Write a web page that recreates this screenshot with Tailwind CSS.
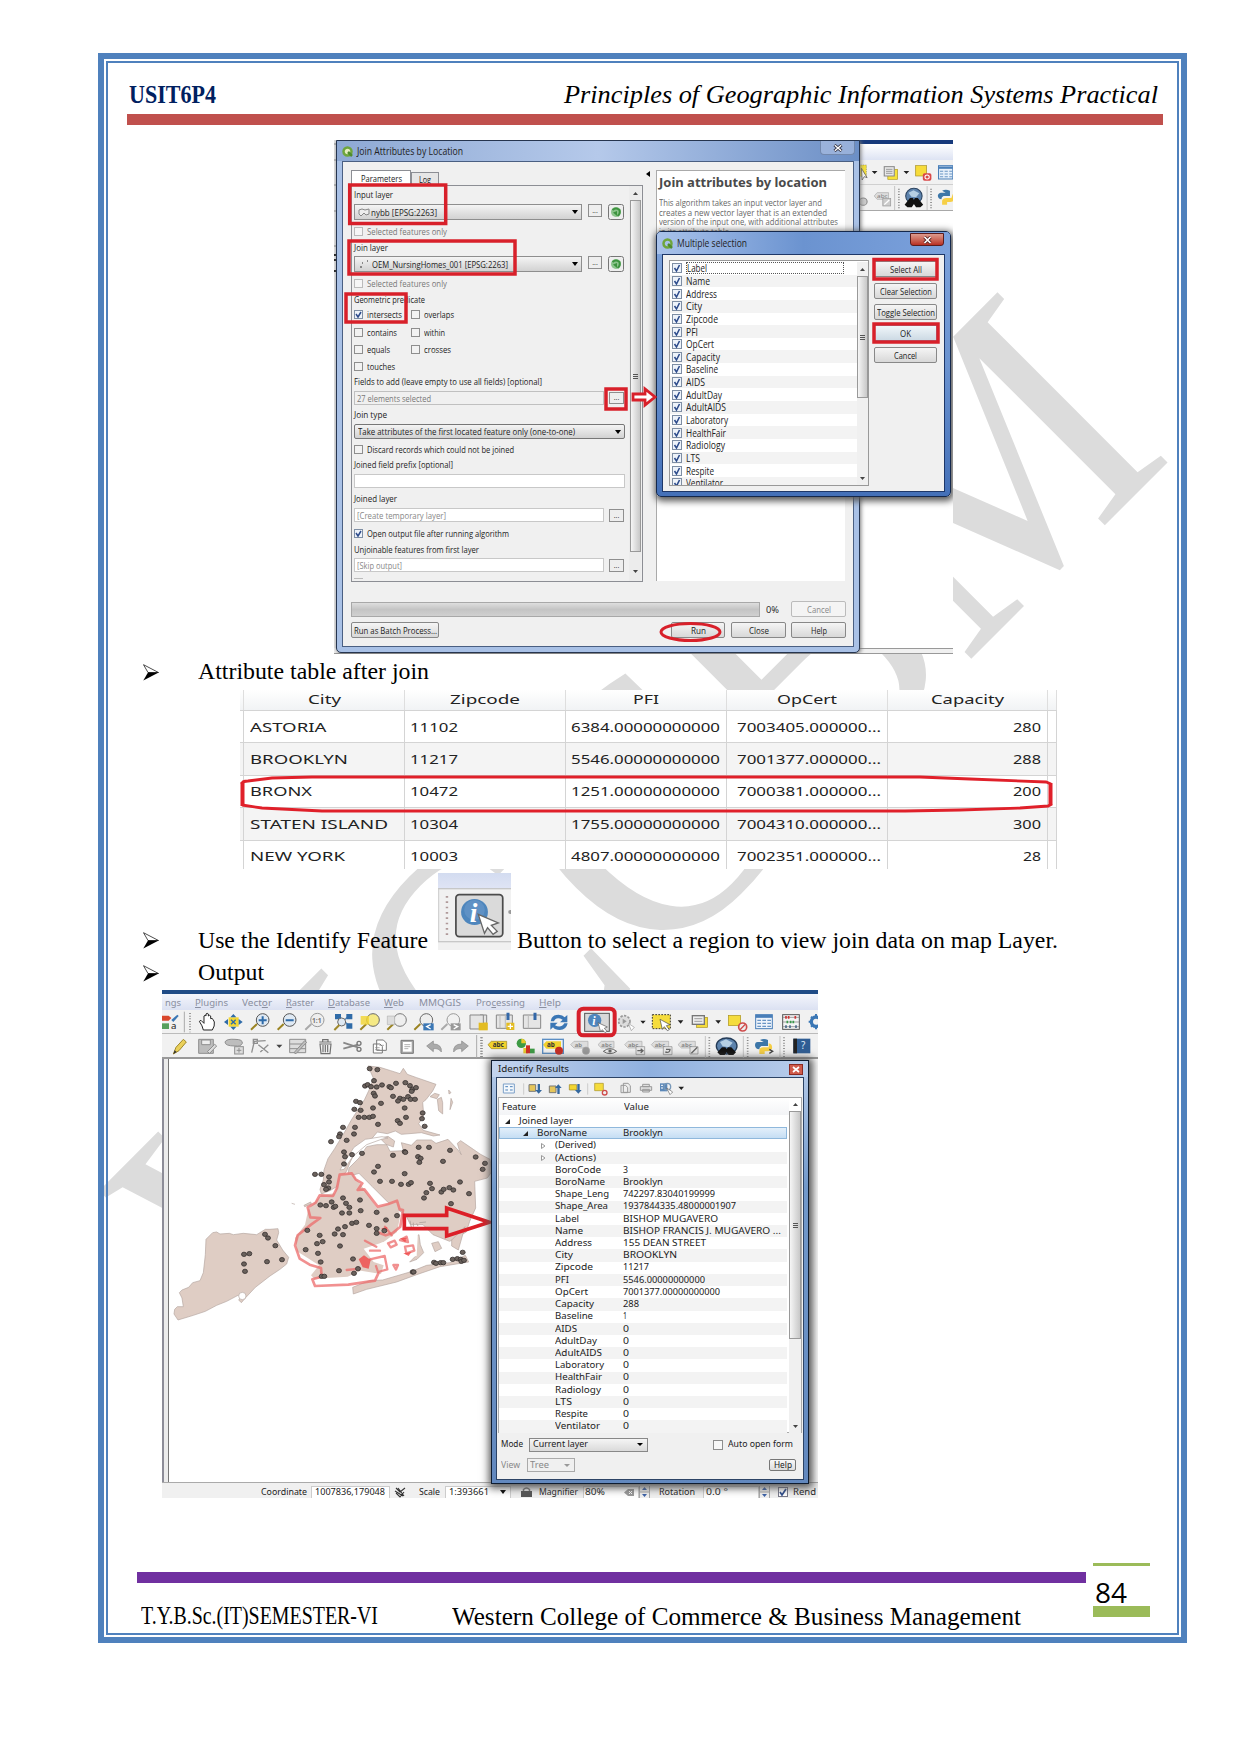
<!DOCTYPE html>
<html lang="en">
<head>
<meta charset="utf-8">
<title>USIT6P4 - Principles of Geographic Information Systems Practical</title>
<script src="https://cdn.jsdelivr.net/npm/@tailwindcss/browser@4"></script>
</head>
<body class="bg-white [&_[data-w]]:inline-block [&_[data-w]]:origin-left [&_[data-w]]:shrink-0 [&_[data-w]]:whitespace-nowrap">
<div class="relative h-[1755px] w-[1241px] overflow-hidden bg-white pt-[53px] pl-[98px] font-['Liberation_Serif',serif] text-black">

<!-- watermark -->
<svg class="absolute top-0 left-0" width="1241" height="1755">
  <text transform="translate(269 1361) rotate(-45) scale(1 1.1)" font-family="Liberation Serif" font-size="334" fill="#dcdcdc">WCCBM</text>
</svg>

<div class="relative h-[1590px] w-[1089px] border-[6px] border-[#4f81bd] p-[2px]">
<div class="flex h-full flex-col border-2 border-[#4f81bd]">

  <header class="ml-[19px] flex h-[51px] w-[1036px] items-end justify-between pb-[5px] leading-[28px]">
    <b data-w="87" class="ml-[2px] text-[25px] text-[#002060]">USIT6P4</b>
    <i data-w="594" class="mr-[5px] text-[26px]">Principles of Geographic Information Systems Practical</i>
  </header>
  <div class="ml-[19px] h-[11px] w-[1036px] shrink-0 bg-[#c0504d]"></div>

  <!-- first screenshot -->
  <section class="relative mt-[15px] ml-[226px] h-[514px] w-[619px] shrink-0 overflow-hidden bg-white font-['Open_Sans',sans-serif] text-[9px] leading-none text-[#222]">
    <div class="h-1 bg-[#173a7c]"></div>
    <div class="h-4 bg-linear-to-b from-white to-[#dde3f3]"></div>
    <div class="h-[51px] border-b border-[#a8a8a8] bg-[#f1f1f1]"><div class="h-[25px] border-b border-[#d0d0d0]"></div></div>
    <svg class="absolute top-0 left-0" width="619" height="514">
      <rect y="508" width="619" height="6" fill="#f0f0f0"/><path d="M0 513.500H619M526 508.500H619" stroke="#999"/>
      <rect x="0" y="0" width="3" height="508" fill="#e4e4e4"/><path d="M0 4H3M0 20H3M0 45H3M0 71H3M0 106H3" stroke="#888"/><path d="M0 115H3M0 120H3M0 131H3" stroke="#222" stroke-width="2"/>
      <g transform="translate(306 -100) scale(.3571 .3333)">
        <rect x="610" y="375" width="24" height="34" fill="#f7e33a" stroke="#333" stroke-dasharray="4 3"/><path d="M620 385l16 28-8-3-6 10z" fill="#fff" stroke="#444" stroke-width="2"/>
        <path d="M649 393h16l-8 9zM738 393h16l-8 9z" fill="#222"/>
        <rect x="694" y="388" width="27" height="30" fill="#f7e33a" stroke="#b09a20" stroke-width="2"/><rect x="684" y="380" width="28" height="28" fill="#e8e8e8" stroke="#888" stroke-width="3"/><path d="M689 388h18M689 394h18M689 400h18" stroke="#777" stroke-width="2"/>
        <rect x="772" y="377" width="30" height="31" fill="#f7dc3a" stroke="#a89020" stroke-width="2"/><rect x="792" y="400" width="24" height="22" rx="5" fill="#d94848"/><circle cx="804" cy="411" r="6" fill="none" stroke="#fff" stroke-width="3"/>
        <rect x="836" y="377" width="40" height="40" fill="#e7f0fa" stroke="#4a7fb8" stroke-width="3"/><path d="M836 383h40" stroke="#4a7fb8" stroke-width="7"/><path d="M840 394h36M840 402h36M840 410h36" stroke="#6a95c4" stroke-width="3" stroke-dasharray="9 4"/>
        <path d="M656 468l8-10h32v20h-32z" fill="#ddd" stroke="#aaa" stroke-width="2"/><text x="664" y="474" font-size="18" fill="#777">abc</text><rect x="680" y="476" width="22" height="22" fill="#ccc" stroke="#999" stroke-width="2"/><path d="M684 494l14-14" stroke="#fff" stroke-width="4"/>
        <circle cx="625" cy="485" r="11" fill="#ccc" stroke="#888" stroke-width="3"/>
        <path d="M713 438v72M804 438v72" stroke="#c8c8c8" stroke-width="3"/><path d="M725 446v60M815 446v60" stroke="#777" stroke-width="4" stroke-dasharray="3 5"/>
        <circle cx="767" cy="468" r="23" fill="#5d83ad" stroke="#2d4561" stroke-width="3"/><path d="M752 458l14-7 16 9-9 12-13-2z" fill="#b5cfe3"/><path d="M756 474h8l3 6 3-6h8l15 20-8 8h-12l-6-10-6 10h-12l-8-8z" fill="#111"/>
        <path d="M846 452q10-6 22 0v16h-18q-6 2-6 10-8 0-10-10 0-8 8-10h14" fill="#3c76a8"/><path d="M876 462q8 4 6 16-4 8-14 8h-8v8h-14v-12q2-8 12-8h14z" fill="#f6cf45"/>
      </g>
    </svg>

    <!-- algorithm window -->
    <div class="absolute top-0 left-[2px] h-[513px] w-[524px] rounded-b-[5px] border border-[#26354f] bg-[#a9c1e6] shadow-[1px_1px_4px_#777]">
      <div class="flex h-5 items-center justify-between bg-linear-to-r from-[#8ea9d4] via-[#b5c9ea] to-[#6c8fc6] pl-[5px]">
        <div class="flex items-center gap-[4px]">
          <svg width="11" height="11" viewBox="0 0 11 11"><circle cx="5.500" cy="5.500" r="4" fill="#e6edc0" stroke="#6fa63c" stroke-width="2.500"/><path d="M6 6l4 4" stroke="#4f8d2c" stroke-width="2.500"/></svg>
          <span data-w="106" class="text-[10.500px]">Join Attributes by Location</span>
        </div>
        <div class="mr-[4px] flex h-[14px] w-[35px] items-center justify-center self-start rounded-b-[4px] border border-t-0 border-[#7288ad] bg-[#b2c5e6]/60 text-white">
          <svg width="10" height="8" viewBox="0 0 10 8"><path d="M1.500 1l7 6M8.500 1l-7 6" stroke="#334" stroke-width="3"/><path d="M1.800 1.200l6.400 5.600M8.200 1.200l-6.400 5.600" stroke="#fff" stroke-width="1.400"/></svg>
        </div>
      </div>
      <div class="mx-[5px] flex h-[486px] w-[512px] flex-col border border-[#4a5f82] bg-[#f0f0f0]">
        <div class="flex h-[420px]">
          <div class="ml-[8px] w-[292px] pt-[8px]">
            <div class="flex h-[15px] items-end">
              <div class="flex h-[15px] w-[60px] items-center justify-center border border-b-0 border-[#8c8e94] bg-white"><span data-w="41">Parameters</span></div>
              <div class="flex h-[13px] w-[28px] items-center justify-center border border-b-0 border-[#8c8e94] bg-[#e6e6e6]"><span data-w="12">Log</span></div>
            </div>
            <div class="flex h-[397px] border border-[#8c8e94]">
              <div id="form" class="flex w-[277px] flex-col pl-[2px]">
                <div class="flex h-4 items-center"><span data-w="39">Input layer</span></div>
                <div class="flex h-5 items-center">
                  <div class="flex h-4 w-[228px] items-center justify-between border border-[#8e8e8e] bg-linear-to-b from-[#f4f4f4] to-[#d2d2d2] px-[3px]"><span class="flex items-center gap-px"><svg width="12" height="9"><path d="M1 2l3-1 3 1 4-1v5l-3 1-2-2-3 3-2-2z" fill="#eee" stroke="#888"/></svg><span data-w="66">nybb [EPSG:2263]</span></span><svg width="6" height="4"><path d="M0 0h6l-3 4z"/></svg></div>
                  <div class="mb-[3px] ml-[6px] flex h-[13px] w-[14px] items-end justify-center border border-[#8e8e8e] bg-[#eee] pb-[2px] text-[7px]">...</div>
                  <svg class="ml-[6px]" width="16" height="16"><rect x=".5" y=".5" width="15" height="15" rx="2" fill="#eee" stroke="#777"/><circle cx="8" cy="8" r="5" fill="#8cc48c"/><path d="M4.500 6q3.500-3 7 0 1 4-2 6" fill="none" stroke="#3d933f" stroke-width="2"/><path d="M5 8.500l4-1.500v5z" fill="#3d933f"/></svg>
                </div>
                <div class="flex h-[19px] items-center gap-1 text-[#777]"><i class="size-[9px] border border-[#bbb] bg-[#f6f6f6]"></i><span data-w="80">Selected features only</span></div>
                <div class="flex h-3 items-center"><span data-w="34">Join layer</span></div>
                <div class="flex h-[22px] items-center">
                  <div class="flex h-4 w-[228px] items-center justify-between border border-[#8e8e8e] bg-linear-to-b from-[#f4f4f4] to-[#d2d2d2] px-[3px]"><span class="flex items-center gap-[2px]"><svg width="12" height="10"><path d="M2 8h2M4 4h1M9 2h1" stroke="#888" stroke-width="2"/></svg><span data-w="136">OEM_NursingHomes_001 [EPSG:2263]</span></span><svg width="6" height="4"><path d="M0 0h6l-3 4z"/></svg></div>
                  <div class="mb-[3px] ml-[6px] flex h-[13px] w-[14px] items-end justify-center border border-[#8e8e8e] bg-[#eee] pb-[2px] text-[7px]">...</div>
                  <svg class="ml-[6px]" width="16" height="16"><rect x=".5" y=".5" width="15" height="15" rx="2" fill="#eee" stroke="#777"/><circle cx="8" cy="8" r="5" fill="#8cc48c"/><path d="M4.500 6q3.500-3 7 0 1 4-2 6" fill="none" stroke="#3d933f" stroke-width="2"/><path d="M5 8.500l4-1.500v5z" fill="#3d933f"/></svg>
                </div>
                <div class="flex h-[17px] items-center gap-1 text-[#777]"><i class="size-[9px] border border-[#bbb] bg-[#f6f6f6]"></i><span data-w="80">Selected features only</span></div>
                <div class="flex h-[14px] items-center"><span data-w="71">Geometric predicate</span></div>
                <div class="flex h-[17px] items-center gap-1"><svg class="shrink-0" width="9" height="9"><rect x=".5" y=".5" width="8" height="8" fill="#eef3fa" stroke="#7e8ea4"/><path d="M2 4l2 3 3-5" fill="none" stroke="#2e4c8c" stroke-width="1.500"/></svg><span data-w="35">intersects</span><i class="ml-[5px] size-[9px] border border-[#8e8e8e] bg-[#f2f2f2]"></i><span data-w="30">overlaps</span></div>
                <div class="flex h-[18px] items-center gap-1"><i class="size-[9px] border border-[#8e8e8e] bg-[#f2f2f2]"></i><span data-w="30">contains</span><i class="ml-[10px] size-[9px] border border-[#8e8e8e] bg-[#f2f2f2]"></i><span data-w="21">within</span></div>
                <div class="flex h-[16px] items-center gap-1"><i class="size-[9px] border border-[#8e8e8e] bg-[#f2f2f2]"></i><span data-w="23">equals</span><i class="ml-[17px] size-[9px] border border-[#8e8e8e] bg-[#f2f2f2]"></i><span data-w="27">crosses</span></div>
                <div class="flex h-[18px] items-center gap-1"><i class="size-[9px] border border-[#8e8e8e] bg-[#f2f2f2]"></i><span data-w="28">touches</span></div>
                <div class="flex h-[13px] items-center"><span data-w="188">Fields to add (leave empty to use all fields) [optional]</span></div>
                <div class="flex h-5 items-center"><div class="flex h-[14px] w-[250px] items-center border border-[#c0c0c0] pl-[2px] text-[#777]"><span data-w="74">27 elements selected</span></div><div class="ml-[5px] flex h-[12px] w-[15px] items-end justify-center border border-[#8e8e8e] bg-[#eee] pb-[2px] text-[7px]">...</div></div>
                <div class="flex h-[13px] items-center"><span data-w="33">Join type</span></div>
                <div class="flex h-[21px] items-center"><div class="flex h-[15px] w-[271px] items-center justify-between rounded-[2px] border border-[#777] bg-linear-to-b from-[#f4f4f4] to-[#d2d2d2] px-[3px]"><span data-w="217">Take attributes of the first located feature only (one-to-one)</span><svg width="6" height="4"><path d="M0 0h6l-3 4z"/></svg></div></div>
                <div class="flex h-[15px] items-center gap-1"><i class="size-[9px] border border-[#8e8e8e] bg-[#f2f2f2]"></i><span data-w="147">Discard records which could not be joined</span></div>
                <div class="flex h-[15px] items-center"><span data-w="99">Joined field prefix [optional]</span></div>
                <div class="flex h-[18px] items-center"><div class="h-[14px] w-[271px] border border-[#c8c8c8] bg-white"></div></div>
                <div class="flex h-[17px] items-center"><span data-w="43">Joined layer</span></div>
                <div class="flex h-4 items-center"><div class="flex h-[14px] w-[250px] items-center border border-[#c8c8c8] bg-white pl-[2px] text-[#888]"><span data-w="89">[Create temporary layer]</span></div><div class="ml-[5px] flex h-[13px] w-[15px] items-end justify-center border border-[#8e8e8e] bg-[#eee] pb-[2px] text-[7px]">...</div></div>
                <div class="flex h-5 items-center gap-1"><svg class="shrink-0" width="9" height="9"><rect x=".5" y=".5" width="8" height="8" fill="#eef3fa" stroke="#7e8ea4"/><path d="M2 4l2 3 3-5" fill="none" stroke="#2e4c8c" stroke-width="1.500"/></svg><span data-w="142">Open output file after running algorithm</span></div>
                <div class="flex h-3 items-center"><span data-w="125">Unjoinable features from first layer</span></div>
                <div class="flex h-5 items-center"><div class="flex h-[14px] w-[250px] items-center border border-[#c8c8c8] bg-white pl-[2px] text-[#888]"><span data-w="45">[Skip output]</span></div><div class="ml-[5px] flex h-[13px] w-[15px] items-end justify-center border border-[#8e8e8e] bg-[#eee] pb-[2px] text-[7px]">...</div></div>
                <i class="mt-[3px] h-px w-[9px] bg-[#bbb]"></i>
              </div>
              <div class="flex w-3 flex-col items-center bg-[#ececec]">
                <svg class="mt-[6px] shrink-0" width="5" height="3"><path d="M0 3h5L2.500 0z" fill="#444"/></svg>
                <div class="mt-[5px] flex h-[352px] w-[11px] flex-col items-center justify-center gap-px border border-[#999] bg-linear-to-r from-[#f6f6f6] to-[#c8c8c8]"><i class="h-px w-[5px] bg-[#555]"></i><i class="h-px w-[5px] bg-[#555]"></i><i class="h-px w-[5px] bg-[#555]"></i></div>
                <svg class="mt-[18px] shrink-0" width="5" height="3"><path d="M0 0h5L2.500 3z" fill="#444"/></svg>
              </div>
            </div>
          </div>
          <svg class="mt-[9px] ml-[3px]" width="4" height="6"><path d="M4 0v6L0 3z"/></svg>
          <div class="mt-[8px] ml-[6px] h-[411px] w-[189px] border-t border-l border-[#aaa] bg-white pt-[5px] pl-[2px] text-[#666]">
            <b data-w="168" class="font-['Noto_Sans',sans-serif] text-[12px] leading-[13px] text-[#4a4a4a]">Join attributes by location</b>
            <div class="mt-[9px] text-[9px] leading-[9.700px] [&>span]:block">
              <span data-w="163">This algorithm takes an input vector layer and</span>
              <span data-w="168">creates a new vector layer that is an extended</span>
              <span data-w="179">version of the input one, with additional attributes</span>
              <span data-w="72">in its attribute table.</span>
            </div>
          </div>
        </div>
        <div class="mt-[19px] ml-[8px] flex h-4 items-center">
          <div class="h-[15px] w-[409px] border border-[#a8a8a8] bg-linear-to-b from-[#dedede] via-[#c4c4c4] to-[#d0d0d0]"></div>
          <span data-w="13" class="ml-[6px]">0%</span>
          <div class="ml-[12px] flex h-4 w-[55px] items-center justify-center rounded-[2px] border border-[#bbb] bg-[#f4f4f4] text-[#888]"><span data-w="24">Cancel</span></div>
        </div>
        <div class="mt-[5px] ml-[8px] flex h-4 items-center">
          <div class="flex h-4 w-[88px] items-center justify-center rounded-[2px] border border-[#888] bg-linear-to-b from-[#f5f5f5] to-[#d8d8d8]"><span data-w="83">Run as Batch Process...</span></div>
          <div class="ml-[232px] flex h-4 w-[54px] items-center justify-center rounded-[2px] border border-[#888] bg-linear-to-b from-[#f5f5f5] to-[#d8d8d8]"><span data-w="15">Run</span></div>
          <div class="ml-[6px] flex h-4 w-[55px] items-center justify-center rounded-[2px] border border-[#888] bg-linear-to-b from-[#f5f5f5] to-[#d8d8d8]"><span data-w="20">Close</span></div>
          <div class="ml-[5px] flex h-4 w-[55px] items-center justify-center rounded-[2px] border border-[#888] bg-linear-to-b from-[#f5f5f5] to-[#d8d8d8]"><span data-w="16">Help</span></div>
        </div>
      </div>
    </div>

    <!-- field picker -->
    <div class="absolute top-[91px] left-[322px] h-[266px] w-[295px] rounded-[5px] border border-[#14284c] bg-linear-to-b from-[#7ea3dc] via-[#6b93d0] to-[#4470b8] shadow-[1px_2px_7px_2px_#555]">
      <div class="flex h-[22px] items-center justify-between rounded-t-[4px] bg-linear-to-r from-[#a9c2ea] via-[#6b93d0] to-[#7ba1dc] pl-[5px]">
        <div class="flex items-center gap-[4px]">
          <svg width="11" height="11" viewBox="0 0 11 11"><circle cx="5.500" cy="5.500" r="4" fill="#a9c2ea" stroke="#6fa63c" stroke-width="2.500"/><path d="M6 6l4 4" stroke="#4f8d2c" stroke-width="2.500"/></svg>
          <span data-w="70" class="text-[10.500px]">Multiple selection</span>
        </div>
        <div class="mt-px mr-[6px] flex h-[13px] w-[34px] items-center justify-center self-start rounded-b-[3px] border border-[#5c1d1d] bg-linear-to-b from-[#dc9a8e] to-[#b82d22]">
          <svg width="9" height="8" viewBox="0 0 9 8"><path d="M1.500 1l6 6M7.500 1l-6 6" stroke="#522" stroke-width="3.200"/><path d="M1.500 1l6 6M7.500 1l-6 6" stroke="#fff" stroke-width="1.700"/></svg>
        </div>
      </div>
      <div class="mx-[5px] flex h-[238px] w-[283px] border border-[#1e3768] bg-[#f0f0f0] pt-[5px] pl-[6px]">
        <div class="flex h-[226px] w-[200px] border border-[#999] bg-white pt-px">
          <div id="fields" class="h-[223px] w-[187px] overflow-hidden text-[10px]"></div>
          <div class="flex w-[11px] flex-col items-center bg-[#f0f0f0]">
            <svg class="mt-[6px] shrink-0" width="5" height="3"><path d="M0 3h5L2.500 0z" fill="#444"/></svg>
            <div class="mt-[5px] flex h-[122px] w-[11px] shrink-0 flex-col items-center justify-center gap-px border border-[#999] bg-linear-to-r from-[#f6f6f6] to-[#c8c8c8]"><i class="h-px w-[5px] bg-[#555]"></i><i class="h-px w-[5px] bg-[#555]"></i><i class="h-px w-[5px] bg-[#555]"></i></div>
            <svg class="mt-[79px] shrink-0" width="5" height="3"><path d="M0 0h5L2.500 3z" fill="#444"/></svg>
          </div>
        </div>
        <div class="ml-[5px] flex flex-col">
          <div class="mt-[1px] flex h-[16px] w-[63px] items-center justify-center border border-[#888] bg-linear-to-b from-[#f5f5f5] to-[#d8d8d8]"><span data-w="32">Select All</span></div>
          <div class="mt-[6px] flex h-[16px] w-[63px] items-center justify-center rounded-[2px] border border-[#888] bg-linear-to-b from-[#f5f5f5] to-[#d8d8d8]"><span data-w="52">Clear Selection</span></div>
          <div class="mt-[5px] flex h-[16px] w-[63px] items-center justify-center rounded-[2px] border border-[#888] bg-linear-to-b from-[#f5f5f5] to-[#d8d8d8]"><span data-w="58">Toggle Selection</span></div>
          <div class="mt-[5px] flex h-[16px] w-[63px] items-center justify-center border border-[#78a8c8] bg-linear-to-b from-[#f0f6fa] to-[#cddae4]"><span data-w="11">OK</span></div>
          <div class="mt-[6px] flex h-[16px] w-[63px] items-center justify-center rounded-[2px] border border-[#888] bg-linear-to-b from-[#f5f5f5] to-[#d8d8d8]"><span data-w="23">Cancel</span></div>
        </div>
      </div>
    </div>

    <!-- red annotations -->
    <svg class="absolute top-0 left-0" width="619" height="514" fill="none" stroke="#d8202a" stroke-width="3.500">
      <rect x="15.700" y="45" width="96" height="38.500"/><rect x="15" y="101" width="166" height="33"/><rect x="12" y="154" width="60" height="28"/>
      <rect x="272" y="249" width="20" height="20"/><rect x="540" y="119.500" width="63" height="19.500"/><rect x="540" y="184" width="64" height="18"/>
      <ellipse cx="356.500" cy="492" rx="29.500" ry="8.500" stroke-width="3"/>
      <path d="M299 254h12v-5l10 8-10 8v-5h-12z" fill="#fff" stroke-width="2.800"/>
    </svg>
  </section>

  <div class="ml-[35px] flex h-[36px] shrink-0 items-center">
    <svg width="16" height="17" viewBox="0 0 16 17"><path d="M.5.700L15.500 8.500H5z" fill="#fff" stroke="#000" stroke-width=".7"/><path d="M.3 16.500L15.700 8.500H5z"/></svg>
    <span data-w="231" class="ml-[38.500px] text-[23px]">Attribute table after join</span>
  </div>

  <!-- attribute table -->
  <section class="relative ml-[132px] h-[179px] w-[817px] shrink-0 overflow-hidden bg-white font-['Noto_Sans',sans-serif] text-[13px] leading-none text-[#222]">
    <div class="grid h-[21px] grid-cols-[4px_161px_161px_161px_161px_160px_9px] border-b border-[#d4d4d4] bg-linear-to-b from-white to-[#f1f3f5] [&>*]:flex [&>*]:items-center [&>*]:justify-center [&>*]:border-r [&>*]:border-[#dedede] [&>*]:pb-[2px]">
      <i></i><div><span data-w="33">City</span></div><div><span data-w="70">Zipcode</span></div><div><span data-w="26">PFI</span></div><div><span data-w="60">OpCert</span></div><div><span data-w="73">Capacity</span></div><i></i>
    </div>
    <div id="attrs"></div>
    <svg class="absolute top-0 left-0" width="817" height="179" fill="none" stroke="#e0202a"><path d="M2 94q0-3 6-3l24-3 40-1H680l50 2 76 3 5 2" stroke-width="2.800"/><path d="M2 115l20 3 60 3H665l55-1 60-2 28-2 4-2" stroke-width="2.800"/><path d="M2.500 92v24M810.500 93v22" stroke-width="4"/></svg>
  </section>

  <div class="ml-[35px] flex h-[88px] shrink-0 items-start text-[23px] leading-[32px]">
    <svg class="mt-[63px]" width="16" height="17" viewBox="0 0 16 17"><path d="M.5.700L15.500 8.500H5z" fill="#fff" stroke="#000" stroke-width=".7"/><path d="M.3 16.500L15.700 8.500H5z"/></svg>
    <span data-w="230" class="mt-[56px] ml-[38.500px]">Use the Identify Feature</span>
    <svg class="mt-[4px] ml-[10px]" width="73" height="77" viewBox="923 669 212 231" preserveAspectRatio="none">
      <defs><linearGradient id="lav" x2="0" y2="1"><stop stop-color="#d3dcf0"/><stop offset="1" stop-color="#dfe4f5"/></linearGradient></defs>
      <rect x="923" y="669" width="212" height="231" fill="#f1f1f1"/><rect x="923" y="669" width="212" height="46" fill="url(#lav)"/><path d="M923 716h212M923 875h212" stroke="#bbb" stroke-width="3"/><path d="M925 716v158" stroke="#ccc" stroke-width="3"/>
      <path d="M949 738v124" stroke="#b09a9a" stroke-width="7" stroke-dasharray="5 11"/>
      <rect x="975" y="734" width="136" height="126" rx="10" fill="#dadada" stroke="#4c4c4c" stroke-width="5"/>
      <circle cx="1029" cy="786" r="39" fill="#4e86bd"/><circle cx="1029" cy="780" r="30" fill="#6a9aca" opacity=".6"/>
      <text x="1015" y="816" font-family="Liberation Serif" font-style="italic" font-weight="bold" font-size="80" fill="#fff">i</text>
      <path d="M1040 793l58 26-20 7 17 18-12 9-16-20-9 17z" fill="#fff" stroke="#666" stroke-width="4"/><circle cx="1133" cy="786" r="6" fill="#999"/>
    </svg>
    <span data-w="541" class="mt-[56px] ml-[6.500px]">Button to select a region to view join data on map Layer.</span>
  </div>
  <div class="ml-[35px] flex h-[33px] shrink-0 items-center">
    <svg width="16" height="17" viewBox="0 0 16 17"><path d="M.5.700L15.500 8.500H5z" fill="#fff" stroke="#000" stroke-width=".7"/><path d="M.3 16.500L15.700 8.500H5z"/></svg>
    <span data-w="66" class="ml-[38.500px] text-[23px]">Output</span>
  </div>

  <!-- second screenshot -->
  <section class="relative ml-[54px] flex h-[508px] w-[656px] shrink-0 flex-col overflow-hidden bg-white font-['Noto_Sans',sans-serif] text-[8.500px] leading-none text-[#222]">
    <div class="h-1 shrink-0 bg-[#1f4b86]"></div>
    <div class="flex h-4 shrink-0 items-center bg-linear-to-b from-[#f3f5fb] to-[#dbe1f2] pl-[2.500px] text-[9px] text-[#8a8fa0]">
      <span data-w="16">ngs</span><span data-w="33" class="ml-[14.500px]"><u>P</u>lugins</span><span data-w="30" class="ml-[14px]">Vect<u>o</u>r</span><span data-w="28" class="ml-[14px]"><u>R</u>aster</span><span data-w="42" class="ml-[14px]"><u>D</u>atabase</span><span data-w="20" class="ml-[14px]"><u>W</u>eb</span><span data-w="42" class="ml-[15px]">MMQGIS</span><span data-w="49" class="ml-[15px]">Pro<u>c</u>essing</span><span data-w="22" class="ml-[14px]"><u>H</u>elp</span>
    </div>
    <div class="h-6 shrink-0 border-b border-[#bbb] bg-[#f1f1f1]"></div>
    <div class="h-[25px] shrink-0 border-b-2 border-[#9a9a9a] bg-[#f1f1f1]"></div>
    <div class="flex h-[424px] shrink-0 border-b border-[#aaa]"><div class="w-[2px] bg-[#8d8d98]"></div><div class="w-[5px] border-r border-[#777] bg-[#ececec]"></div></div>
    <div class="flex h-[15px] shrink-0 items-center bg-[#f0f0f0] pt-[3px] pl-[98.700px] [&>div]:flex [&>div]:h-[13px] [&>div]:shrink-0 [&>div]:items-center [&>div]:border [&>div]:border-[#ccc] [&>div]:bg-white [&>svg]:shrink-0">
      <span data-w="46">Coordinate</span><div class="ml-[4px] w-[79px] pl-[3px]"><span data-w="70">1007836,179048</span></div>
      <svg class="ml-[4px]" width="13" height="11"><path d="M2 1l4 4 5-4M2 6l4 4 4-5M1 4l8 5M4 1l6 8" fill="none" stroke="#333" stroke-width="1.100"/></svg>
      <span data-w="21" class="ml-[12px]">Scale</span><div class="ml-[5px] w-[66px] justify-between pr-[4px] pl-[3px]"><span data-w="40">1:393661</span><svg width="6" height="4"><path d="M0 0h6L3 4z"/></svg></div>
      <svg class="ml-[10px]" width="11" height="10"><rect y="4" width="11" height="6" fill="#555"/><path d="M2.500 4V2.500q3-3 6 0V4" fill="none" stroke="#777" stroke-width="1.500"/></svg>
      <span data-w="39" class="ml-[7px]">Magnifier</span><div class="ml-[5px] w-[56px] justify-between pl-[1px]"><span data-w="20">80%</span><svg width="14" height="7"><path d="M0 3.500L4 0h6v7H4z" fill="#999"/><path d="M5 2l3 3M8 2L5 5" stroke="#fff"/></svg></div>
      <svg width="11" height="12"><path d="M.5 0v12M10.500 0v12M0 6h11" stroke="#aaa"/><path d="M3 4h5L5.500 1zM3 8h5l-2.500 3z" fill="#3c62a8"/></svg>
      <span data-w="36" class="ml-[9px]">Rotation</span><div class="ml-[8px] w-[56px] pl-[2px]"><span data-w="22">0.0 °</span></div>
      <svg width="11" height="12"><path d="M.5 0v12M10.500 0v12M0 6h11" stroke="#aaa"/><path d="M3 4h5L5.500 1zM3 8h5l-2.500 3z" fill="#3c62a8"/></svg>
      <svg class="ml-[8px]" width="10" height="10"><rect x=".5" y=".5" width="9" height="9" fill="#fff" stroke="#778"/><path d="M2 5l2 3 4-6" fill="none" stroke="#2e4c8c" stroke-width="1.700"/></svg><span data-w="23" class="ml-[5px]">Rend</span>
    </div>

    <svg class="absolute top-0 left-0" width="656" height="508">
      <g transform="translate(-12 -10) scale(.33333)">
        <!-- toolbar, left half -->
        <path d="M36 107h20l8 7-8 8H36z" fill="#d9472b"/><path d="M64 120l18-16 4 4-16 18z" fill="#3b77b5"/><rect x="36" y="130" width="21" height="17" fill="#56a05c"/><text x="63" y="146" font-size="29" fill="#222">a</text>
        <path d="M103 95v62M980 165v68" stroke="#aaa" stroke-width="3"/><path d="M120 99v58M993 172v60" stroke="#888" stroke-width="5" stroke-dasharray="3 5"/>
        <path d="M160 150q-2-12-12-26l5-3 9 9v-22q4-4 6 0v-6q4-4 7 0v6q4-4 7 0v8q5-2 7 2l4 8q2 12-6 24z" fill="#fff" stroke="#222" stroke-width="3"/>
        <rect x="236" y="112" width="30" height="28" fill="#f3d631"/><path d="M250 102l9 10h-18zM250 150l9-10h-18zM222 126l12-9v18zM278 126l-12-9v18z" fill="#2f6ba8"/><path d="M243 119l14 14M257 119l-14 14" stroke="#2f6ba8" stroke-width="4"/>
        <g fill="#dfe9f3" stroke-width="3"><path d="M303 149l18-17M383 149l18-17M631 149l18-17M712 149l18-17M793 149l18-17" stroke="#9b8423" stroke-width="6"/><path d="M466 149l18-17M874 149l18-17" stroke="#aaa" stroke-width="6"/>
        <circle cx="338" cy="120" r="19" stroke="#555"/><circle cx="419" cy="120" r="19" stroke="#555"/><circle cx="502" cy="120" r="20" stroke="#999" fill="#eee"/><circle cx="669" cy="120" r="19" stroke="#666" fill="#f5e985"/><circle cx="750" cy="120" r="19" stroke="#777" fill="#eee"/><circle cx="829" cy="120" r="19" stroke="#666" fill="#eee"/><circle cx="910" cy="120" r="19" stroke="#999" fill="#f1f1f1"/></g>
        <path d="M326 121h24M338 109v24M407 121h24" stroke="#2f6ba8" stroke-width="6"/><text x="486" y="128" font-size="20" font-weight="bold" fill="#777">1:1</text>
        <path d="M570 112l22 20M592 112l-22 20" stroke="#5c8fc4" stroke-width="4"/><path d="M555 102h18v16h-18zM589 102h18v16h-18zM589 130h18v16h-18z" fill="#2f6ba8"/><circle cx="575" cy="126" r="12" fill="#dfe9f3" stroke="#666" stroke-width="3"/><path d="M553 150l15-15" stroke="#a08a2c" stroke-width="6"/>
        <path d="M632 108h25v26h-25z" fill="#f3d631" opacity=".8"/><path d="M712 108h22v26h-22z" fill="#ddd" stroke="#888"/>
        <rect x="820" y="130" width="31" height="21" fill="#3b77b5"/><path d="M842 134l-12 6 12 7" fill="none" stroke="#fff" stroke-width="4"/><rect x="902" y="130" width="30" height="21" fill="#999"/><path d="M911 134l12 6-12 7" fill="none" stroke="#fff" stroke-width="4"/>
        <path d="M960 105h50v42h-50z" fill="#e5e5e5" stroke="#888" stroke-width="3"/><rect x="986" y="128" width="27" height="23" fill="#e3bc22"/><path d="M1000 131v17M992 139h16" stroke="#fff" stroke-width="4"/>
        <path d="M70 222l8-20 22-24 9 8-22 26z" fill="#ead05a" stroke="#a0892a" stroke-width="3"/><path d="M70 222l4-11 6 5z" fill="#333"/>
        <g fill="#bdbdbd" stroke="#8f8f8f" stroke-width="3"><path d="M146 178h44v42h-44z"/><path d="M155 180h26v14h-26z" fill="#eee"/><path d="M172 215l22-22 6 5-21 22z" fill="#ddd"/>
        <path d="M225 186q4-10 30-8 24 0 22 12-4 10-22 8-30 0-30-12z"/><rect x="254" y="200" width="26" height="22" fill="#ddd"/><path d="M260 211h14M267 204v14"/>
        <path d="M305 218l8-34 34-2M310 178h12v12h-12zM325 194l30 24M355 194l-24 22" fill="none" stroke-width="4"/>
        <path d="M419 178h48v40h-48zM419 192h48M419 206h48" fill="#ddd"/><path d="M432 218l32-36 6 5-32 34z"/></g>
        <path d="M379 194h18l-9 10z" fill="#444"/>
        <path d="M508 186h36M518 185v-6h16v6M510 192l3 29h27l3-29zM519 195v22M526 195v22M533 195v22" fill="none" stroke="#707070" stroke-width="3.500"/>
        <path d="M580 188l44 14M580 206l44-12" stroke="#888" stroke-width="5"/><circle cx="627" cy="190" r="6" fill="none" stroke="#777" stroke-width="4"/><circle cx="627" cy="208" r="6" fill="none" stroke="#777" stroke-width="4"/>
        <path d="M680 180h20l9 9v22h-29zM670 192h20l7 7v20h-27z" fill="#fff" stroke="#777" stroke-width="3"/><path d="M675 203h14M675 209h14M688 196h14" stroke="#888" stroke-width="2"/>
        <path d="M753 181h37v39h-37z" fill="#aaa" stroke="#777" stroke-width="3"/><path d="M759 186h26v29h-26z" fill="#fff"/><path d="M763 194h18M763 200h18M763 206h12" stroke="#888" stroke-width="2"/>
        <path d="M830 198l20-15v9q26 0 24 24-8-12-24-10v9zM955 198l-20-15v9q-26 0-24 24 8-12 24-10v9z" fill="#aaa" stroke="#888" stroke-width="2"/>

        <!-- map -->
        <g fill="#dfcdc4" stroke="#b3a59e" stroke-width="2" stroke-linejoin="round">
          <path d="M654 258l36 4 32 10 28 9 10-16 12 18 28 10 58 20-10 20-20 26-10 8 2 24 0 20-14 20 14 20 50 14-20 3-36-10-60 5-18-10-24 8-30-5-22 26-22 5-20 26-16 30-12 30-20 25-10 22-20 12-26 10-4-14 10-28 2-30 12-34 20-30 30-50 20-36 40-62 16-34 10-30z"/>
          <path d="M650 500l30 -6 30 0 10 20 40-2-6-24 30 8 16-16 44 0 14 10 36-12 30 32 10 14-6-14-6-20 10-8 38 26 20 14 30 16 6 36-14 20-38 10 3 80-18 40-10 32-50 28-50-20-30-30-38 0-14-30 -40-24-60-60-40-40-34 10 4-26 30-30z"/>
          <path d="M570 582l35-2 30 38 46 66 52-22 18 44-10 50-40 30-60 20 30 40 30 10-8 26-60-10-40 18-100 6-10-10 24-30-66-42-6-40 30-40 10-46 40-44 40-4z" stroke="none"/>
          <path d="M168 778l20-20 12-2 10 6 28-2 12 4 30-4 40 4 26-16 14 0 24-2 2 12-6 22 18 30 18 22-6 20-20 16-30 20-44 34-28 30-14 16-8-8 12-16-14 2-34 18-30 12-34 18-36 12-46 14-12-18 2-14 8-8 18 0-4-26-8-16 8-8 20-8 12-14 22-6 10-24 6-54z"/>
          <path d="M608 922l50-20 40-2 82-24 50-20 70-8 46-22 10 20-86 14-70 24-60 22-90 22-40 14z"/>
          <path d="M795 770l12-6 4 30 10 24-20 20-22 8 18-18z M845 790l20-5 10 20-20 10z M905 780l40-40-20 70-20-12z M862 358l12 -6 4 16 0 34-12-10zM903 355l5 12-8 22zM896 330l7 8-6 4z M840 350l14-10 14 4-8 12z"/>
          <path d="M690 475l24-6 20 14-4 18-22-8z"/><path d="M612 502l34-24 50-8 18 4-20 4-44 16-42 36-26 38-12 2 20-34z" fill="#fff"/>
          <circle cx="277" cy="948" r="11" fill="#fff"/><path d="M462 676l20-10 2 6-20 8zM425 670l10 3" />
        </g>
        <path d="M690 790l40-14 40-16 34-8-4 76-70 12-28-10z" fill="#fff"/>
        <g fill="none" stroke="#ec6b6b" stroke-opacity=".75" stroke-linejoin="round" stroke-linecap="round">
          <path d="M605 580l12 18 20 12-14 20 20-2 40 52 32-8 26-10 8 26 10 2-8 50-24 20-20 6-20-8M605 580l-36 4-8 40-12 24-40-2-12 22-24 14 8 30 30 2-28 20-40 32-8 30 14 40 30 18 34 10 2 26-28 8 8 20 100-4 80-12 10-22" stroke-width="8"/>
          <path d="M714 790l20-8 6 12-18 8zM750 780l20-10 4 16zM765 800l24-4 4 16-24 8zM730 855l14 0-6 14zM705 740l20 26M645 782l34 18M660 812l30 0M590 870l40-4M660 838l44-10 8 40-28 8-6-18" stroke-width="7"/>
        </g>
        <path d="M626 838l16-12 20 14-6 26-18-4zM750 775l20-2-4 14zM760 820l24-4-8 12zM694 745l18-4-4 16z" fill="#f04848" opacity=".8"/>
        <g id="dots" fill="#6a615c" stroke="#383331" stroke-width="2.500"></g>
        <path d="M780 722l4 20M790 728v12M800 730l4 8M808 728l20-2" stroke="#b7a9a2" stroke-width="3" fill="none"/>
        <path d="M763 706H890V684L1018 727 890 768V746H763z" fill="none" stroke="#dc1f27" stroke-width="11"/>
      </g>
      <g transform="translate(318 -10) scale(.33333)">
        <!-- toolbar, right half -->
        <path d="M0 105h10v42H0M49 105h48v40H49zM130 105h52v40h-52z" fill="#e5e5e5" stroke="#888" stroke-width="3"/><path d="M60 105v40M76 105v40M145 105v40" stroke="#bbb" stroke-width="3"/><path d="M84 98v22M165 98v22" stroke="#3468a8" stroke-width="9"/><path d="M0 128h22v22H0zM79 128h24v22H79z" fill="#e3bc22"/><path d="M91 131v16M83 139h16" stroke="#fff" stroke-width="4"/>
        <path d="M212 124q2-20 24-20 12 0 18 8l8-7v22h-22l8-8q-20-10-26 5zM263 130q-4 20-24 20-14 0-20-8l-8 7v-21h22l-8 8q18 10 28-6z" fill="#3b77b5"/>
        <rect x="314" y="100" width="74" height="54" fill="#d8d8d8" stroke="#555" stroke-width="3"/><circle cx="344" cy="121" r="20" fill="#4e86bd"/><text x="337" y="134" font-family="Liberation Serif" font-style="italic" font-weight="bold" font-size="36" fill="#fff">i</text><path d="M354 128l28 13-9 4 8 9-6 4-8-9-5 7z" fill="#fff" stroke="#555" stroke-width="2"/>
        <circle cx="433" cy="124" r="17" fill="#ddd" stroke="#999" stroke-width="5" stroke-dasharray="7 4"/><path d="M428 116l12 8-12 8z" fill="#999"/><path d="M445 130l18 12-9 10z" fill="#fff" stroke="#999" stroke-width="2"/>
        <path d="M481 122h16l-8 9zM593 121h17l-8 10zM706 121h17l-8 10z" fill="#222"/>
        <rect x="517" y="104" width="54" height="42" fill="#f5dc3c" stroke="#333" stroke-width="3" stroke-dasharray="5 4"/><path d="M540 118l30 16-11 3 9 12-6 3-9-12-6 8z" fill="#fff" stroke="#444" stroke-width="2"/>
        <rect x="650" y="112" width="33" height="30" fill="#f5dc3c" stroke="#a89020" stroke-width="2"/><rect x="637" y="107" width="36" height="26" fill="#eee" stroke="#777" stroke-width="4"/><path d="M643 116h24M643 124h24" stroke="#777" stroke-width="2"/>
        <rect x="745" y="106" width="37" height="31" fill="#f5dc3c" stroke="#a89020" stroke-width="2"/><circle cx="788" cy="141" r="12" fill="#eee" stroke="#cf4b4b" stroke-width="5"/><path d="M780 149l16-16" stroke="#cf4b4b" stroke-width="4"/>
        <rect x="827" y="104" width="50" height="42" fill="#eef4fb" stroke="#4a7fb8" stroke-width="3"/><path d="M827 109h50" stroke="#4a7fb8" stroke-width="9"/><path d="M832 121h42M832 130h42M832 139h42" stroke="#6a95c4" stroke-width="4" stroke-dasharray="11 4"/>
        <rect x="908" y="104" width="50" height="44" fill="#f4f4f4" stroke="#555" stroke-width="3"/><path d="M908 112h50M908 126h50M908 140h50" stroke="#777" stroke-width="2"/><path d="M918 108v8M926 108v8M946 108v8" stroke="#c33" stroke-width="5"/><path d="M922 122v8M932 122v8M940 122v8" stroke="#3a9a4a" stroke-width="5"/><path d="M918 136v8M930 136v8M948 136v8" stroke="#4a6a8a" stroke-width="5"/>
        <circle cx="1008" cy="125" r="14" fill="none" stroke="#3b77b5" stroke-width="10"/><path d="M986 125h10M993 110l8 7M993 140l8-7M1008 102v8M1008 140v8" stroke="#3b77b5" stroke-width="6"/>
        <path d="M24 194l10-10h46v22H34z" fill="#f2d22c" stroke="#9a8420" stroke-width="2"/><path d="M189 194l10-10h44v22h-44z" fill="#f2d22c"/><rect x="188" y="178" width="62" height="42" fill="none" stroke="#5b8ec4" stroke-width="4"/><g font-size="19" font-weight="bold" fill="#333"><text x="38" y="202">abc</text><text x="201" y="201">ab</text></g><circle cx="237" cy="212" r="12" fill="#c62d24"/>
        <circle cx="124" cy="190" r="14" fill="#3d9a44"/><path d="M124 190v-14a14 14 0 0 1 14 14z" fill="#e8c92c"/><path d="M130 204h14v16h-14z" fill="#e8c92c"/><path d="M138 196h12v24h-12z" fill="#cf3026"/><path d="M150 206h14v14h-14z" fill="#3d9a44"/>
        <g fill="#ddd" stroke="#aaa" stroke-width="2"><path d="M272 194l10-10h42v20h-42zM354 194l10-10h38v20h-38zM434 194l10-10h42v20h-42zM514 194l10-10h42v20h-42zM594 194l10-10h42v20h-42z"/><circle cx="318" cy="212" r="11" fill="#999"/><path d="M370 214q20-16 40 0-20 14-40 0z" fill="#eee" stroke="#666" stroke-width="3"/><circle cx="390" cy="213" r="5" fill="#666"/><path d="M468 200h26v24h-26zM550 200h26v24h-26zM630 200h24v22h-24z" stroke="#888" fill="#e8e8e8"/><path d="M472 212h16M482 206l7 6-7 6M556 216q14 4 14-8h-12M634 220l18-18" fill="none" stroke="#666" stroke-width="4"/></g>
        <g font-size="18" font-weight="bold" fill="#888"><text x="284" y="200">ab</text><text x="364" y="200">abc</text><text x="444" y="200">abc</text><text x="524" y="200">abc</text><text x="604" y="200">abc</text></g>
        <path d="M676 168v66M790 168v66M900 168v66" stroke="#c4c4c4" stroke-width="3"/><path d="M6 172v60M688 172v60M803 172v60M912 172v60" stroke="#888" stroke-width="5" stroke-dasharray="3 5"/>
        <ellipse cx="740" cy="198" rx="31" ry="24" fill="#5d83ad" stroke="#243b57" stroke-width="4"/><path d="M720 186l18-8 20 10-12 14-18-3z" fill="#b5cfe3"/><path d="M726 202h10l4 5 4-5h10l14 15-8 8h-14l-6-8-6 8h-14l-8-8z" fill="#111"/>
        <path d="M840 180q12-6 24 0v18h-20q-6 2-6 10-12 0-13-12 0-10 8-10h18" fill="#3c76a8"/><path d="M866 190q12 2 10 16-4 8-14 8h-8v8h-16v-12q2-8 12-8h16z" fill="#f6cf45"/><path d="M868 208l10 6-10 6" fill="none" stroke="#444" stroke-width="4"/>
        <rect x="940" y="176" width="51" height="44" fill="#2f5d94"/><path d="M940 176h11v44h-11z" fill="#222"/><text x="963" y="208" font-size="30" fill="#dfe9f5">?</text>
        <rect x="296" y="86" width="108" height="80" rx="14" fill="none" stroke="#d61f2a" stroke-width="12"/>
      </g>
    </svg>

    <!-- identify results window -->
    <div class="absolute top-[70px] left-[329px] h-[424px] w-[318px] border border-[#0e1c30] bg-linear-to-b from-[#b8cdea] via-[#7299cb] via-30% to-[#6288be] shadow-[1px_1px_8px_3px_#555]">
      <div class="flex h-4 items-center justify-between bg-linear-to-r from-[#c3d4ee] via-[#8fb0df] to-[#b9cdea] pr-[5px] pl-[6px]">
        <span data-w="71" class="text-[9.500px]">Identify Results</span>
        <svg class="mt-px" width="14" height="11"><rect x=".5" y=".5" width="13" height="10" fill="#cf5a4a" stroke="#8c2a22"/><path d="M4 3l6 5M10 3L4 8" stroke="#fff" stroke-width="1.700"/></svg>
      </div>
      <div class="mx-[4px] flex h-[403px] w-[308px] flex-col border border-[#2c4365] bg-[#f0f0f0]">
        <div class="h-[19px] shrink-0"></div>
        <div class="ml-px flex h-[336px] w-[304px] shrink-0 flex-col border border-[#aaa] bg-white">
          <div class="flex h-[17px] shrink-0">
            <div class="flex w-[290px] items-center bg-linear-to-b from-white to-[#f3f4f6] pl-[3px] text-[9px]"><span data-w="34">Feature</span><span data-w="25" class="ml-[88px]">Value</span></div>
            <svg class="mt-[5px] ml-[4px]" width="5" height="3"><path d="M0 3h5L2.500 0z" fill="#444"/></svg>
          </div>
          <div class="flex">
            <div id="tree" class="w-[288px]"></div>
            <div class="-mt-[4px] ml-[2px] flex w-3 flex-col items-center bg-[#f0f0f0]">
              <div class="flex h-[228px] w-3 flex-col items-center justify-center gap-px border border-[#999] bg-linear-to-r from-[#f6f6f6] to-[#c8c8c8]"><i class="h-px w-[5px] bg-[#555]"></i><i class="h-px w-[5px] bg-[#555]"></i><i class="h-px w-[5px] bg-[#555]"></i></div>
              <svg class="mt-[86px]" width="5" height="3"><path d="M0 0h5L2.500 3z" fill="#444"/></svg>
            </div>
          </div>
        </div>
        <div class="mt-[4px] flex h-[15px] items-center pl-[4px]">
          <span data-w="22">Mode</span>
          <div class="ml-[6px] flex h-[14px] w-[119px] items-center justify-between border border-[#888] bg-linear-to-b from-[#f5f5f5] to-[#dadada] pr-[4px] pl-[3px]"><span data-w="55">Current layer</span><svg width="6" height="3"><path d="M0 0h6L3 3z"/></svg></div>
          <i class="ml-[65px] size-[10px] border border-[#8e8e8e] bg-[#f8f8f8]"></i><span data-w="65" class="ml-[5px]">Auto open form</span>
        </div>
        <div class="mt-[6px] flex h-[14px] items-center pl-[4px]">
          <span data-w="19" class="text-[#888]">View</span>
          <div class="ml-[7px] flex h-[14px] w-[48px] items-center justify-between border border-[#aaa] pr-[4px] pl-[2px] text-[#888]"><span data-w="19">Tree</span><svg width="6" height="3"><path d="M0 0h6L3 3z" fill="#999"/></svg></div>
          <div class="ml-[194px] flex h-[12px] w-[27px] items-center justify-center rounded-[2px] border border-[#777] bg-linear-to-b from-[#f8f8f8] to-[#ddd]"><span data-w="18">Help</span></div>
        </div>
      </div>
    </div>
    <svg class="absolute top-0 left-0" width="656" height="508"><g transform="translate(318 -10) scale(.33333)">
      <path d="M70 312h33v27H70z" fill="#f4f8fc" stroke="#7ba0c8" stroke-width="3"/><path d="M76 320h8M76 330h8M90 320h8M90 330h8" stroke="#4a7fb8" stroke-width="3"/>
      <path d="M131 310v34M323 310v34" stroke="#bbb" stroke-width="2"/>
      <path d="M147 314h20v20h-20zM208 318h20v20h-20z" fill="#e6c65a" stroke="#777" stroke-width="3"/><path d="M268 314h22v16h-22z" fill="#f3d631" stroke="#9a8420" stroke-width="2"/>
      <path d="M173 312h7v18h6l-10 11-10-11h7zM232 342h7v-18h6l-10-11-10 11h7zM292 312h7v18h6l-10 11-10-11h7z" fill="#34689f"/>
      <path d="M344 310h26v22h-26z" fill="#f5dc3c" stroke="#a89020" stroke-width="2"/><circle cx="374" cy="338" r="7" fill="#eee" stroke="#cf4b4b" stroke-width="4"/>
      <path d="M430 310h14l7 7v20h-21zM423 316h14l6 7v15h-20z" fill="#eee" stroke="#999" stroke-width="3"/><path d="M481 320h34v11h-34zM488 313h20v7h-20zM488 328h20v8h-20z" fill="#e0e0e0" stroke="#999" stroke-width="3"/>
      <path d="M540 310h22v24h-22z" fill="#5c88b8"/><path d="M543 316h6M543 324h6" stroke="#fff" stroke-width="3"/><circle cx="562" cy="320" r="10" fill="none" stroke="#7898b8" stroke-width="4"/><path d="M560 324l18 12-8 8z" fill="#fff" stroke="#666" stroke-width="2"/><path d="M595 320h17l-8 10z" fill="#222"/>
    </g></svg>
  </section>

  <!-- footer -->
  <footer class="mt-[65px] ml-[28.500px] flex h-[70px] shrink-0">
    <div class="w-[949.500px] pt-[9px]">
      <div class="h-[11px] bg-[#7030a0]"></div>
      <div class="mt-[17px] flex h-[32px] items-center pl-[4.500px]">
        <span data-w="237" class="text-[25px] leading-[28px]">T.Y.B.Sc.(IT)SEMESTER-VI</span>
        <span data-w="569" class="mt-[2px] ml-[74px] text-[25.500px] leading-[28px]">Western College of Commerce &amp; Business Management</span>
      </div>
    </div>
    <div class="ml-[6.500px] w-[57px]">
      <div class="h-[3px] bg-[#9bbb59]"></div>
      <div class="flex h-[40px] items-end pl-[2px] font-['Open_Sans',sans-serif] text-[28px] leading-[28px]"><span data-w="32">84</span></div>
      <div class="h-[11px] bg-[#9bbb59]"></div>
    </div>
  </footer>
</div>
</div>
</div>

<script>
const $ = id => document.getElementById(id);

// checklist: [field, width]
$('fields').innerHTML = [['Label',20],['Name',24],['Address',31],['City',16],['Zipcode',32],['PFI',12],['OpCert',28],['Capacity',34],['Baseline',32],['AIDS',19],['AdultDay',36],['AdultAIDS',40],['Laboratory',42],['HealthFair',40],['Radiology',39],['LTS',14],['Respite',28],['Ventilator',37]]
  .map(([t, w], i) => `<div class="flex h-[12.650px] items-center pl-[2px] ${i % 2 ? 'bg-[#f3f3f3]' : 'bg-white'}"><svg class="shrink-0" width="10" height="10"><rect x=".5" y=".5" width="9" height="9" fill="#eef3fa" stroke="#7e8ea4"/><path d="M2.500 5l2 3 3-6" fill="none" stroke="#2e4c8c" stroke-width="1.600"/></svg><div class="ml-[4px] flex h-[12px] items-center ${i ? '' : 'w-[158px] border border-dotted border-[#555]'}"><span data-w="${w}">${t}</span></div></div>`).join('');

$('attrs').innerHTML = [['ASTORIA',76.5,'11102','6384.00000000000','7003405.000000...','280'],['BROOKLYN',98,'11217','5546.00000000000','7001377.000000...','288'],['BRONX',62,'10472','1251.00000000000','7000381.000000...','200'],['STATEN ISLAND',138,'10304','1755.00000000000','7004310.000000...','300'],['NEW YORK',95,'10003','4807.00000000000','7002351.000000...','28']]
  .map(([c, w, z, p, o, k], i) => `<div class="grid h-[32.400px] grid-cols-[4px_161px_161px_161px_161px_160px_9px] border-b border-[#d4d4d4] [&>*]:flex [&>*]:items-center [&>*]:border-r [&>*]:border-[#d4d4d4] [&>*]:pt-px ${i % 2 ? 'bg-[#f4f4f4]' : 'bg-white'}"><i></i><div class="pl-[6px]"><span data-w="${w}">${c}</span></div><div class="pl-[5px]"><span data-w="48">${z}</span></div><div class="pl-[5px]"><span data-w="149">${p}</span></div><div class="pl-[10px]"><span data-w="144">${o}</span></div><div class="justify-end pr-[6px]"><span data-w="${k.length > 2 ? 28 : 18}">${k}</span></div><i></i></div>`).join('');

// tree rows: [depth, name, width, value, width]
$('tree').innerHTML = [[0,'Joined layer',54,'',0],[1,'BoroName',50,'Brooklyn',40],[2,'(Derived)',41,'',0],[2,'(Actions)',41,'',0],[3,'BoroCode',46,'3',5],[3,'BoroName',50,'Brooklyn',40],[3,'Shape_Leng',54,'742297.83040199999',92],[3,'Shape_Area',53,'1937844335.48000001907',113],[3,'Label',24,'BISHOP MUGAVERO',95],[3,'Name',28,'BISHOP FRANCIS J. MUGAVERO ...',158],[3,'Address',37,'155 DEAN STREET',83],[3,'City',18,'BROOKLYN',54],[3,'Zipcode',38,'11217',26],[3,'PFI',14,'5546.00000000000',82],[3,'OpCert',33,'7001377.00000000000',97],[3,'Capacity',39,'288',16],[3,'Baseline',38,'1',4],[3,'AIDS',22,'0',6],[3,'AdultDay',42,'0',6],[3,'AdultAIDS',47,'0',6],[3,'Laboratory',49,'0',6],[3,'HealthFair',47,'0',6],[3,'Radiology',46,'0',6],[3,'LTS',17,'0',6],[3,'Respite',33,'0',6],[3,'Ventilator',45,'0',6]]
  .map(([d, n, w, v, vw], i) => {
    const pad = ['pl-[6px]', 'pl-[24px]', 'pl-[42px]', 'pl-[56px]'][d];
    const mark = d < 2 ? '<svg class="mr-[8px] shrink-0" width="6" height="5"><path d="M5 0v5H0z" fill="#222"/></svg>' : d === 2 ? '<svg class="mr-[9px] shrink-0" width="5" height="6"><path d="M.5.500L4 3 .5 5.500z" fill="#fff" stroke="#999"/></svg>' : '';
    return `<div class="flex h-[12.230px] items-center ${i === 1 ? 'bg-linear-to-b from-[#e6f1fb] to-[#c2dcf3] outline-1 -outline-offset-1 outline-[#8fb8dc]' : i % 2 ? 'bg-[#f3f3f3]' : 'bg-white'}"><div class="flex w-[124px] shrink-0 items-center ${pad}">${mark}<span data-w="${w}">${n}</span></div>${v ? `<span data-w="${vw}">${v}</span>` : ''}</div>`;
  }).join('');

// nursing home locations
$('dots').innerHTML = [[659,266],[682,269],[672,302],[645,318],[653,314],[663,320],[680,321],[696,315],[718,320],[723,323],[738,310],[766,308],[780,317],[787,328],[798,323],[785,334],[671,340],[675,348],[729,349],[750,355],[744,363],[760,358],[774,350],[782,358],[795,358],[764,384],[693,370],[669,384],[618,364],[630,368],[613,388],[632,391],[626,412],[643,412],[658,412],[669,409],[684,433],[743,422],[750,430],[768,412],[818,399],[816,416],[824,439],[579,442],[615,442],[570,462],[567,470],[612,462],[543,485],[590,481],[582,516],[585,530],[606,524],[636,520],[582,552],[495,583],[514,583],[537,591],[537,606],[522,614],[535,624],[528,628],[806,502],[837,502],[900,511],[729,526],[764,515],[766,517],[804,530],[812,535],[808,547],[879,544],[977,531],[1005,550],[998,568],[684,559],[672,576],[764,581],[690,604],[726,604],[753,613],[776,613],[783,608],[840,610],[846,626],[829,638],[822,654],[874,636],[881,628],[898,623],[910,630],[930,606],[957,641],[903,671],[579,654],[630,660],[545,666],[511,675],[528,677],[551,682],[556,679],[588,670],[598,682],[632,692],[576,699],[598,699],[680,697],[708,720],[741,707],[657,736],[680,746],[703,752],[680,760],[606,730],[619,727],[585,740],[564,747],[554,762],[579,764],[472,751],[509,766],[518,785],[501,791],[570,798],[467,809],[504,820],[512,846],[609,837],[567,872],[612,880],[624,866],[515,889],[523,889],[345,763],[354,774],[376,797],[282,823],[298,821],[282,852],[285,874],[351,845],[396,839],[788,876],[791,876],[852,847],[858,850],[872,848],[880,848],[908,838],[922,836],[932,838],[934,844],[942,841],[938,817]]
  .map(([x, y]) => `<ellipse cx="${x}" cy="${y}" rx="7.500" ry="6.500"/>`).join('');

// stretch or squeeze each text run to its set width
function fit() {
  const runs = [...document.querySelectorAll('[data-w]')];
  runs.forEach(e => { e.style.width = ''; e.style.transform = 'none'; });
  const natural = runs.map(e => {
    const r = document.createRange();
    r.selectNodeContents(e);
    return r.getBoundingClientRect().width;
  });
  runs.forEach((e, i) => {
    e.style.width = e.dataset.w + 'px';
    e.style.transform = `scaleX(${e.dataset.w / natural[i]})`;
  });
}
addEventListener('DOMContentLoaded', fit);
addEventListener('load', () => {
  fit();
  requestAnimationFrame(fit);
  [30, 120, 300].forEach(t => setTimeout(fit, t));
});
document.fonts.ready.then(fit);
</script>
</body>
</html>
